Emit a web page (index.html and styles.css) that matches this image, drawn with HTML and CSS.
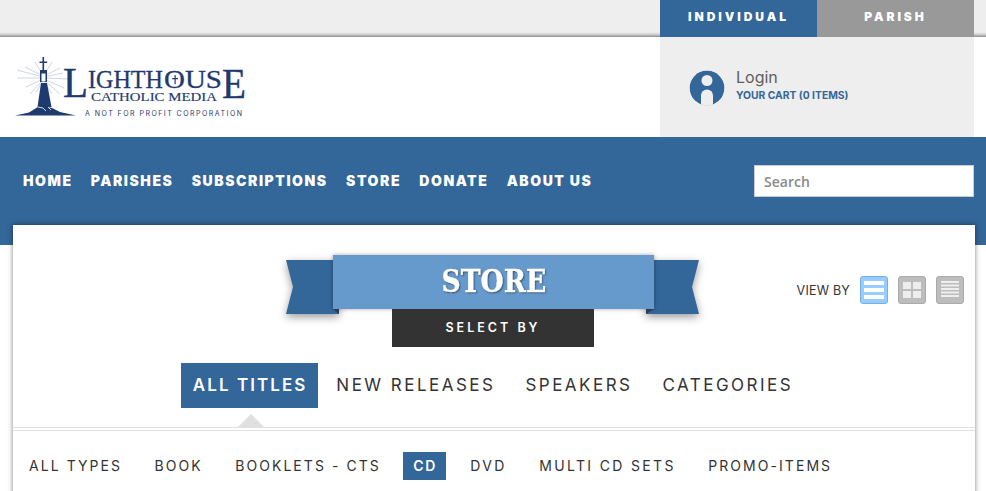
FILE: index.html
```html
<!DOCTYPE html>
<html lang="en">
<head>
<meta charset="utf-8">
<title>Lighthouse Catholic Media Store</title>
<link rel="stylesheet" href="styles.css">
</head>
<body>
<div class="topbar">
  <div class="tabs">
    <a class="tab tab-on">INDIVIDUAL</a>
    <a class="tab tab-off">PARISH</a>
  </div>
</div>
<header class="header">
  <svg class="logo" width="236" height="66" viewBox="0 0 236 66">
    <g stroke="#c4cad6" stroke-width="0.8">
      <path d="M29 21L3 14M29 22L3 22M29 20L11 11M29 19L21 6M29 23L12 31M29 24L16 38M29 25L22 36M30 21L49 17M30 22L55 23M30 20L46 12M30 19L38 6M30 24L46 38M30 23L50 32M30 25L38 38"/>
    </g>
    <path class="navy" d="M28.500 1h1.600v4.500h3v1.500h-3v7h-1.600v-7h-3v-1.500h3zM26 14h7v3h-7zM26 17h7v9h-7zM27 27h6l4.500 24h-14z"/>
    <path class="white" d="M27.500 17.500h4v8h-4z"/>
    <path class="navy" d="M1 59.500l14-3 8-5 6-2.500 5 2 4 1 8 4 16 3.500z"/>
    <path class="logo-crack" d="M24 51l5 1 3 3M34 51l3 3"/>
    <text class="logo-l" x="49" y="41" textLength="25" lengthAdjust="spacingAndGlyphs">L</text>
    <text class="logo-main" x="74" y="32" textLength="75" lengthAdjust="spacingAndGlyphs">IGHTH</text>
    <text class="logo-main" x="150" y="32" textLength="58" lengthAdjust="spacingAndGlyphs">OUS</text>
    <path class="navy" d="M160.500 19h1.200v3h2.300v1.200h-2.300v5h-1.200v-5h-2.300v-1.200h2.300z"/>
    <text class="logo-l" x="208" y="42" textLength="24" lengthAdjust="spacingAndGlyphs">E</text>
    <text class="logo-sub" x="77" y="45" textLength="126" lengthAdjust="spacingAndGlyphs">CATHOLIC MEDIA</text>
    <text class="logo-tag" x="71" y="60" textLength="157" lengthAdjust="spacing">A NOT FOR PROFIT CORPORATION</text>
  </svg>
  <div class="account">
    <svg class="avatar" width="36" height="36" viewBox="0 0 36 36">
      <defs><clipPath id="av"><circle cx="18" cy="18" r="17.500"/></clipPath></defs>
      <g clip-path="url(#av)">
        <circle cx="18" cy="18" r="17.500" fill="#336699"/>
        <circle cx="18" cy="10.500" r="5.500" fill="#eee"/>
        <path d="M12 34V25.500a6 6 0 0 1 12 0V34z" fill="#eee"/>
        <path d="M0 34h36v2H0z" fill="#eee"/>
      </g>
    </svg>
    <div class="account-text">
      <a class="login">Login</a>
      <a class="cart">YOUR CART (0 ITEMS)</a>
    </div>
  </div>
</header>
<nav class="nav">
  <ul class="menu">
    <li>HOME</li><li>PARISHES</li><li>SUBSCRIPTIONS</li><li>STORE</li><li>DONATE</li><li>ABOUT US</li>
  </ul>
  <input class="search" type="text" placeholder="Search">
</nav>
<main class="card">
  <div class="head-row">
    <div class="ribbon">
      <span class="tail tail-l"></span>
      <span class="tail tail-r"></span>
      <h1 class="ribbon-face"><span class="ribbon-title">STORE</span></h1>
      <span class="fold fold-l"></span>
      <span class="fold fold-r"></span>
      <div class="select-by">SELECT BY</div>
    </div>
    <div class="viewby">
      <span class="viewby-label">VIEW BY</span>
      <span class="vb vb-on"><svg width="20" height="20" viewBox="0 0 20 20"><path d="M0 1h20v4H0zM0 8h20v4H0zM0 15h20v4H0z"/></svg></span>
      <span class="vb"><svg width="20" height="20" viewBox="0 0 20 20"><path d="M1 2h8v7H1zM11 2h8v7h-8zM1 11h8v7H1zM11 11h8v7h-8z"/></svg></span>
      <span class="vb"><svg width="20" height="20" viewBox="0 0 20 20"><path d="M1 1h18v2H1zM1 4.500h18v2H1zM1 8h18v2H1zM1 11.500h18v2H1zM1 15h18v2H1z"/></svg></span>
    </div>
  </div>
  <div class="primary">
    <a class="p-item p-on">ALL TITLES</a>
    <a class="p-item">NEW RELEASES</a>
    <a class="p-item">SPEAKERS</a>
    <a class="p-item">CATEGORIES</a>
  </div>
  <div class="divider"><span class="caret"></span></div>
  <div class="secondary">
    <a class="s-item">ALL TYPES</a>
    <a class="s-item">BOOK</a>
    <a class="s-item">BOOKLETS - CTS</a>
    <a class="s-item s-on">CD</a>
    <a class="s-item s-wide">DVD</a>
    <a class="s-item s-wide">MULTI CD SETS</a>
    <a class="s-item">PROMO-ITEMS</a>
  </div>
</main>
</body>
</html>
```
FILE: styles.css
```css
* { box-sizing: border-box; }
html, body { margin: 0; padding: 0; height: 491px; overflow: hidden; background: #fff; }
body { font-family: "Inter", "Liberation Sans", sans-serif; color: #333; position: relative; }
h1 { margin: 0; }

.topbar {
  height: 37px;
  background: linear-gradient(#eeeeee 0, #eeeeee 32px, #d8d8d8 34px, #a8a8a8 36px, #8c8c8c 37px);
  display: flex;
  justify-content: flex-end;
  padding-right: 12px;
}
.tabs { display: flex; }
.tab {
  width: 157px;
  height: 37px;
  display: flex;
  align-items: center;
  justify-content: center;
  color: #fff;
  font-size: 12px;
  font-weight: 900;
  letter-spacing: 2.950px;
  padding-bottom: 5px;
}
.tab-on { background: #336699; }
.tab-off { background: #999; }

.header {
  height: 100px;
  display: flex;
  justify-content: space-between;
  padding: 0 12px 0 14px;
}
.logo { margin-top: 19px; }
.navy { fill: #1f3a6e; }
.white { fill: #fff; }
.logo-crack { fill: none; stroke: #fff; stroke-width: 0.8; }
.logo-l { font-family: "Liberation Serif", serif; font-size: 42px; fill: #1f3a6e; stroke: #1f3a6e; stroke-width: 0.4; }
.logo-main { font-family: "Liberation Serif", serif; font-size: 26px; fill: #1f3a6e; stroke: #1f3a6e; stroke-width: 0.3; }
.logo-sub { font-family: "Liberation Serif", serif; font-size: 12px; fill: #1f3a6e; stroke: #1f3a6e; stroke-width: 0.15; }
.logo-tag { font-family: "Inter", sans-serif; font-size: 7px; fill: #1f3a6e; }

.account {
  width: 314px;
  background: #eee;
  display: flex;
  align-items: flex-start;
  gap: 11px;
  padding: 32px 0 0 29px;
}
.avatar { margin-top: 1px; }
.account-text { display: flex; flex-direction: column; }
.login { font-size: 16px; line-height: 18px; color: #5e5e5e; margin-top: -1px; }
.cart { font-size: 10.300px; line-height: 12px; font-weight: 700; color: #336699; margin-top: 3px; white-space: nowrap; }

.nav {
  height: 108px;
  background: #336699;
  display: flex;
  justify-content: space-between;
  align-items: flex-start;
  padding: 28px 12px 0 23px;
}
.menu {
  list-style: none;
  margin: 0;
  padding: 7px 0 0;
  display: flex;
  gap: 18.300px;
  color: #fff;
  font-size: 14px;
  line-height: 17px;
  font-weight: 900;
  letter-spacing: 1.550px;
}
.search {
  width: 220px;
  height: 32px;
  border: 1px solid #ccc;
  background: #fff;
  padding: 0 9px;
  font: 600 14px "Open Sans", sans-serif;
  outline: none;
}
.search::placeholder { color: #8a8a8a; opacity: 1; }

.card {
  position: absolute;
  left: 13px;
  top: 225px;
  width: 962px;
  height: 290px;
  background: #fff;
  box-shadow: 0 0 5px rgba(0,0,0,.5);
}
.head-row { position: relative; height: 138px; }
.ribbon {
  position: absolute;
  left: 320px;
  top: 30px;
  width: 321px;
}
.ribbon-face {
  position: relative;
  height: 54px;
  background: #6699cc;
  color: #fff;
  font: 700 31px/53px "DejaVu Serif", serif;
  text-align: center;
  box-shadow: 0 0 4px rgba(0,0,0,.35);
}
.ribbon-title {
  display: inline-block;
  transform: scaleX(.86);
  -webkit-text-stroke: 0.4px #fff;
  text-shadow: 1px 1px 2px rgba(0,0,0,.55);
}
.tail {
  position: absolute;
  top: 5px;
  height: 54px;
  filter: drop-shadow(0 3px 4px rgba(0,0,0,.4));
}
.tail::before {
  content: "";
  display: block;
  height: 100%;
  background: #336699;
}
.tail-l { left: -47px; width: 53px; }
.tail-r { right: -45px; width: 53px; }
.tail-l::before { clip-path: polygon(0 0, 100% 0, 100% 100%, 0 100%, 7px 50%); }
.tail-r::before { clip-path: polygon(0 0, 100% 0, 46px 50%, 100% 100%, 0 100%); }
.fold {
  position: absolute;
  top: 54px;
  height: 5px;
  background: #2d3a4f;
}
.fold-l { left: 0; width: 6px; clip-path: polygon(0 0, 100% 0, 100% 100%); }
.fold-r { right: 0; width: 8px; clip-path: polygon(0 0, 100% 0, 0 100%); }
.select-by {
  position: relative;
  width: 202px;
  height: 38px;
  margin-left: 59px;
  background: #333;
  color: #fff;
  font-size: 12.500px;
  font-weight: 600;
  line-height: 37px;
  letter-spacing: 3px;
  text-align: center;
}
.viewby {
  position: absolute;
  top: 51px;
  right: 11px;
  display: flex;
  align-items: center;
}
.viewby-label { font-size: 12.500px; color: #333; margin-right: 10px; letter-spacing: 0.200px; }
.vb {
  width: 28px;
  height: 28px;
  margin-left: 10px;
  border: 1px solid #aaa;
  border-radius: 3px;
  background: #bdbdbd;
  display: flex;
  align-items: center;
  justify-content: center;
  fill: #eee;
}
.vb-on { margin-left: 0; background: #99ccff; border-color: #77aee6; fill: #fff; }

.primary {
  display: flex;
  justify-content: center;
  padding-left: 1px;
}
.p-item {
  height: 45px;
  padding: 0 15px 2px;
  display: flex;
  align-items: center;
  font-size: 17px;
  font-weight: 400;
  letter-spacing: 2.480px;
  color: #333;
}
.p-on { background: #336699; color: #fff; font-weight: 600; padding: 0 11px 2px 12px; margin-right: 3px; letter-spacing: 2.050px; }

.divider {
  position: relative;
  height: 4px;
  margin-top: 19px;
  border-top: 1px solid #e0e0e0;
  border-bottom: 1px solid #e0e0e0;
}
.caret {
  position: absolute;
  left: 224px;
  top: -14px;
  width: 0;
  height: 0;
  border-left: 14px solid transparent;
  border-right: 14px solid transparent;
  border-bottom: 14px solid #e0e0e0;
}
.secondary {
  display: flex;
  align-items: center;
  gap: 12.500px;
  padding: 21px 0 0 6px;
}
.s-item {
  height: 28px;
  padding: 0 10px 1px;
  display: flex;
  align-items: center;
  font-size: 14px;
  letter-spacing: 2.050px;
  color: #333;
}
.s-wide { letter-spacing: 2.350px; }
.s-on { background: #336699; color: #fff; font-weight: 600; padding: 0 9px 1px 10px; margin-right: 2px; letter-spacing: 1.500px; }
```
